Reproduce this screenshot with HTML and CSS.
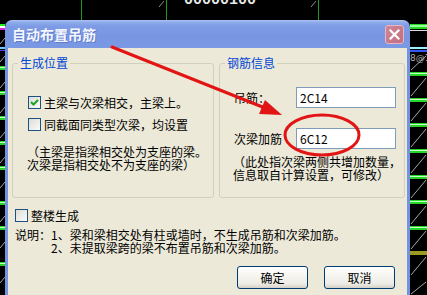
FILE: index.html
```html
<!DOCTYPE html>
<html lang="zh-CN">
<head>
<meta charset="utf-8">
<title>自动布置吊筋</title>
<link rel="stylesheet" href="styles.css">
</head>
<body>
<svg class="cad" width="427" height="295" viewBox="0 0 427 295">
  <rect width="427" height="295" fill="#000"/>
  <g stroke="#1f9a1f" stroke-width="1">
    <line x1="81.5" y1="0" x2="81.5" y2="20"/>
    <line x1="166.5" y1="0" x2="166.5" y2="20"/>
    <line x1="318.5" y1="0" x2="318.5" y2="20"/>
  </g>
  <text x="184" y="4" fill="#e8e8e8" font-family="Liberation Mono" font-size="15" font-weight="bold">00000100</text>
  <g stroke="#8a8a8a" stroke-width="1">
    <line x1="159" y1="7" x2="164" y2="1"/>
    <line x1="311" y1="7" x2="316" y2="1"/>
  </g>
  <rect x="0" y="24" width="5" height="2" fill="#2e2"/>
  <rect x="0" y="26" width="5" height="2" fill="#fff"/>
  <rect x="0" y="28" width="5" height="2" fill="#d2d"/>
  <rect x="0" y="47" width="5" height="2" fill="#6cf"/>
  <rect x="0" y="50" width="5" height="1" fill="#44f"/>
  <rect x="410" y="24" width="17" height="5" fill="#22dd22"/>
  <rect x="410" y="25" width="17" height="2" fill="#9f9"/>
  <rect x="410" y="30" width="17" height="1" fill="#ddd"/>
  <rect x="410" y="47" width="17" height="2" fill="#9ef"/>
  <rect x="410" y="50" width="17" height="2" fill="#35f"/>
  <text x="410" y="61" fill="#aaa" font-family="DejaVu Sans" font-size="9">8@1</text>
  <g fill="#26d626">
    <rect x="410" y="72" width="17" height="4"/>
    <rect x="410" y="98" width="17" height="4"/>
    <rect x="410" y="123" width="17" height="4"/>
    <rect x="410" y="149" width="17" height="4"/>
    <rect x="410" y="175" width="17" height="4"/>
    <rect x="410" y="200" width="17" height="4"/>
    <rect x="410" y="226" width="17" height="4"/>
    <rect x="410" y="251" width="17" height="4" fill="#9a9a20"/>
    <rect x="0" y="66" width="5" height="4"/>
    <rect x="0" y="91" width="5" height="4"/>
    <rect x="0" y="116" width="5" height="4"/>
    <rect x="0" y="141" width="5" height="4"/>
    <rect x="0" y="166" width="5" height="4"/>
    <rect x="0" y="201" width="5" height="4"/>
    <rect x="0" y="226" width="5" height="4"/>
    <rect x="0" y="262" width="5" height="4"/>
  </g>
  <g fill="#c8ffc8">
    <rect x="410" y="73" width="17" height="1"/>
    <rect x="410" y="99" width="17" height="1"/>
    <rect x="410" y="124" width="17" height="1"/>
    <rect x="410" y="150" width="17" height="1"/>
    <rect x="410" y="176" width="17" height="1"/>
    <rect x="410" y="201" width="17" height="1"/>
    <rect x="410" y="227" width="17" height="1"/>
    <rect x="0" y="67" width="5" height="1"/>
    <rect x="0" y="92" width="5" height="1"/>
    <rect x="0" y="117" width="5" height="1"/>
    <rect x="0" y="142" width="5" height="1"/>
    <rect x="0" y="167" width="5" height="1"/>
    <rect x="0" y="202" width="5" height="1"/>
    <rect x="0" y="227" width="5" height="1"/>
    <rect x="0" y="263" width="5" height="1"/>
  </g>
  <g stroke="#cfcfcf" stroke-width="0.8">
    <line x1="411" y1="96" x2="426" y2="78"/>
    <line x1="411" y1="121" x2="426" y2="103"/>
    <line x1="411" y1="147" x2="426" y2="129"/>
    <line x1="411" y1="173" x2="426" y2="155"/>
    <line x1="411" y1="198" x2="426" y2="180"/>
    <line x1="411" y1="224" x2="426" y2="206"/>
    <line x1="411" y1="249" x2="426" y2="231"/>
    <line x1="411" y1="275" x2="426" y2="257"/>
    <line x1="411" y1="294" x2="426" y2="282"/>
    <line x1="411" y1="70" x2="426" y2="56"/>
    <line x1="0" y1="44" x2="5" y2="38"/>
    <line x1="0" y1="62" x2="5" y2="56"/>
    <line x1="0" y1="88" x2="5" y2="82"/>
    <line x1="0" y1="113" x2="5" y2="107"/>
    <line x1="0" y1="138" x2="5" y2="132"/>
    <line x1="0" y1="163" x2="5" y2="157"/>
    <line x1="0" y1="188" x2="5" y2="182"/>
    <line x1="0" y1="222" x2="5" y2="216"/>
    <line x1="0" y1="248" x2="5" y2="242"/>
    <line x1="0" y1="283" x2="5" y2="277"/>
  </g>
</svg>

<div class="dlg">
  <div class="titlebar">
    <span class="title">自动布置吊筋</span>
    <span class="close"><svg width="11" height="11" viewBox="0 0 11 11"><path d="M1.5 1.5 L9.5 9.5 M9.5 1.5 L1.5 9.5" stroke="#fff" stroke-width="2.2" stroke-linecap="square"/></svg></span>
  </div>
  <div class="content">
    <div class="groups">
      <fieldset class="group g-pos">
        <legend>生成位置</legend>
        <div class="inner pos-inner">
          <label class="check row1"><span class="box"><svg width="11" height="11" viewBox="0 0 11 11"><polyline points="2,5 4.5,7.5 9,3" fill="none" stroke="#21a121" stroke-width="2"/></svg></span><span>主梁与次梁相交，主梁上。</span></label>
          <label class="check row2"><span class="box"></span><span>同截面同类型次梁，均设置</span></label>
          <p class="note pos-note">（主梁是指梁相交处为支座的梁。<br>次梁是指相交处不为支座的梁）</p>
        </div>
      </fieldset>
      <fieldset class="group g-bar">
        <legend>钢筋信息</legend>
        <div class="inner bar-inner">
          <div class="field f1"><span class="lbl">吊筋：</span><span class="input">2C14</span></div>
          <div class="field f2"><span class="lbl">次梁加筋</span><span class="input">6C12</span></div>
          <p class="note bar-note">（此处指次梁两侧共增加数量，<br>信息取自计算设置，可修改）</p>
        </div>
      </fieldset>
    </div>
    <label class="check whole"><span class="box"></span><span>整楼生成</span></label>
    <div class="desc">
      <span class="desc-lbl">说明：</span>
      <div class="desc-lines">
        <div>1、梁和梁相交处有柱或墙时，不生成吊筋和次梁加筋。</div>
        <div>2、未提取梁跨的梁不布置吊筋和次梁加筋。</div>
      </div>
    </div>
    <div class="buttons">
      <button class="btn">确定</button>
      <button class="btn">取消</button>
    </div>
  </div>
</div>

<svg class="marks" width="427" height="295" viewBox="0 0 427 295">
  <g stroke="#e31414" fill="none" stroke-width="3" stroke-linecap="round">
    <line x1="112" y1="47" x2="265" y2="108"/>
    <ellipse cx="322" cy="135" rx="37" ry="20"/>
  </g>
  <polygon points="282,115 259,114 265,100" fill="#e31414"/>
</svg>
</body>
</html>
```

FILE: styles.css
```css
html, body {
  margin: 0;
  padding: 0;
  width: 427px;
  height: 295px;
  overflow: hidden;
  background: #000;
}
body {
  position: relative;
  font-family: "Noto Sans CJK SC", "Noto Sans", sans-serif;
  font-size: 12px;
  line-height: 12px;
  color: #000;
}
.cad {
  position: absolute;
  left: 0;
  top: 0;
}
.marks {
  position: absolute;
  left: 0;
  top: 0;
  z-index: 3;
  pointer-events: none;
}
.dlg {
  position: absolute;
  left: 5px;
  top: 20px;
  width: 405px;
  height: 275px;
  display: flex;
  flex-direction: column;
  z-index: 1;
  overflow: hidden;
}
.titlebar {
  height: 28px;
  flex: none;
  border-radius: 7px 7px 0 0;
  background: linear-gradient(to bottom, #b0c6f4 0, #90acec 2px, #7e9ce5 6px, #7795e1 60%, #7b99e3 100%);
  display: flex;
  align-items: center;
  justify-content: space-between;
  padding: 0 6px 0 7px;
}
.title {
  color: #f4f7ff;
  font-size: 14px;
  font-weight: bold;
  line-height: 16px;
  text-shadow: 1px 1px 0 rgba(50, 70, 150, 0.35);
}
.close {
  width: 19px;
  height: 19px;
  box-sizing: border-box;
  border: 1px solid #eab6c2;
  border-radius: 3px;
  background: linear-gradient(135deg, #cf8797, #bf6f80);
  display: flex;
  align-items: center;
  justify-content: center;
}
.content {
  flex: 1;
  background: #ece9d8;
  border-left: 3px solid #7393e0;
  border-right: 3px solid #7393e0;
  padding: 9px 2px 0 4px;
}
.groups {
  display: flex;
  gap: 5px;
}
.group {
  margin: 0;
  padding: 0;
  border: 1px solid #d0d0bf;
  border-radius: 3px;
  height: 141px;
  box-sizing: border-box;
  min-width: 0;
}
.g-pos { width: 202px; }
.g-bar { width: 186px; }
legend {
  color: #0046d5;
  font-size: 12px;
  line-height: 12px;
  padding: 0 2px;
  margin-left: 5px;
}
.pos-inner { padding-left: 15px; }
.bar-inner { padding-left: 14px; }
.check {
  display: flex;
  align-items: center;
  gap: 3px;
  height: 13px;
  line-height: 13px;
  white-space: nowrap;
}
.box {
  width: 13px;
  height: 13px;
  box-sizing: border-box;
  border: 1px solid #1c5180;
  background: linear-gradient(135deg, #dcdcd7, #fbfbf9);
  flex: none;
  display: flex;
}
.row1 { margin-top: 27px; }
.row2 { margin-top: 9px; }
.note {
  margin: 0;
  white-space: nowrap;
  line-height: 13px;
}
.pos-note { margin-top: 14px; margin-left: -1px; }
.field {
  display: flex;
  align-items: center;
}
.lbl {
  width: 62px;
  flex: none;
  white-space: nowrap;
}
.input {
  width: 100px;
  height: 21px;
  box-sizing: border-box;
  border: 1px solid #7f9db9;
  background: #fff;
  padding-left: 3px;
  line-height: 19px;
}
.f1 { margin-top: 18px; }
.f2 { margin-top: 20px; }
.bar-note { margin-top: 6px; margin-left: -1px; }
.whole {
  margin-top: 11px;
  margin-left: 3px;
}
.desc {
  display: flex;
  margin-top: 6px;
  margin-left: 3px;
  white-space: nowrap;
  line-height: 13px;
}
.desc-lbl { width: 36px; flex: none; }
.buttons {
  display: flex;
  justify-content: flex-end;
  gap: 16px;
  margin-top: 12px;
  margin-right: 10px;
}
.btn {
  width: 71px;
  height: 23px;
  box-sizing: border-box;
  border: 1px solid #003c74;
  border-radius: 3px;
  background: linear-gradient(to bottom, #ffffff 0, #f6f5f0 40%, #ecebe4 80%, #d6d0c5 100%);
  font-family: "Noto Sans CJK SC", sans-serif;
  font-size: 12px;
  line-height: 12px;
  color: #000;
  padding: 0;
}
```
